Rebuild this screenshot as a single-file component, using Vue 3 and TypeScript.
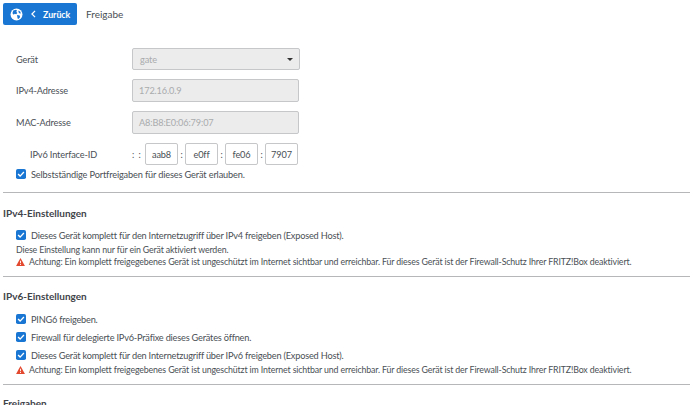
<script setup lang="ts">
const warning = 'Achtung: Ein komplett freigegebenes Gerät ist ungeschützt im Internet sichtbar und erreichbar. Für dieses Gerät ist der Firewall-Schutz Ihrer FRITZ!Box deaktiviert.'
const segments = ['aab8', 'e0ff', 'fe06', '7907']
</script>

<template>
  <div class="page">
    <header class="top">
      <button class="back" type="button">
        <svg class="globe" viewBox="0 0 24 24" width="13" height="13">
          <circle cx="12" cy="12" r="11" fill="#fff" />
          <path fill="#1976d2" d="M6 4.500l5-1.500 2 2-1.500 2 2 2-2 2.500-3-1-1.500 2-2.500-3zM13 13l5 1 .5 3-3 3.500-1.500-1-.5-3.500zM16 4.500l3 2.500 1 3-3-.5-1.500-2.500z" />
        </svg>
        <svg class="chev" viewBox="0 0 8 12" width="5" height="8">
          <path d="M6.500 1L1.500 6l5 5" fill="none" stroke="#fff" stroke-width="2" />
        </svg>
        <span>Zurück</span>
      </button>
      <span class="title">Freigabe</span>
    </header>

    <section class="form">
      <div class="row first">
        <label>Gerät</label>
        <div class="select">gate<i class="caret"></i></div>
      </div>
      <div class="row">
        <label>IPv4-Adresse</label>
        <div class="field">172.16.0.9</div>
      </div>
      <div class="row">
        <label>MAC-Adresse</label>
        <div class="field">A8:B8:E0:06:79:07</div>
      </div>
      <div class="row v6">
        <label>IPv6 Interface-ID</label>
        <div class="segs">
          <span class="sep lead">:&nbsp;&nbsp;:</span>
          <template v-for="(s, i) in segments" :key="s">
            <span v-if="i" class="sep">:</span>
            <div class="seg">{{ s }}</div>
          </template>
        </div>
      </div>
      <div class="check first-check">
        <svg class="box" viewBox="0 0 11 11"><rect width="11" height="11" rx="2" fill="#1976d2" /><path d="M2.300 5.600l2.200 2.200 4.200-4.500" fill="none" stroke="#fff" stroke-width="1.500" /></svg>
        Selbstständige Portfreigaben für dieses Gerät erlauben.
      </div>
    </section>

    <section class="block v4">
      <h2>IPv4-Einstellungen</h2>
      <div class="check">
        <svg class="box" viewBox="0 0 11 11"><rect width="11" height="11" rx="2" fill="#1976d2" /><path d="M2.300 5.600l2.200 2.200 4.200-4.500" fill="none" stroke="#fff" stroke-width="1.500" /></svg>
        Dieses Gerät komplett für den Internetzugriff über IPv4 freigeben (Exposed Host).
      </div>
      <p class="note">Diese Einstellung kann nur für ein Gerät aktiviert werden.</p>
      <p class="warn">
        <svg class="tri" viewBox="0 0 10 9"><path d="M5 0l5 9H0z" fill="#e2492f" /><path d="M4.500 3h1v3h-1zM4.500 6.800h1v1h-1z" fill="#fff" /></svg>
        {{ warning }}
      </p>
    </section>

    <section class="block v6b">
      <h2>IPv6-Einstellungen</h2>
      <div class="check">
        <svg class="box" viewBox="0 0 11 11"><rect width="11" height="11" rx="2" fill="#1976d2" /><path d="M2.300 5.600l2.200 2.200 4.200-4.500" fill="none" stroke="#fff" stroke-width="1.500" /></svg>
        PING6 freigeben.
      </div>
      <div class="check">
        <svg class="box" viewBox="0 0 11 11"><rect width="11" height="11" rx="2" fill="#1976d2" /><path d="M2.300 5.600l2.200 2.200 4.200-4.500" fill="none" stroke="#fff" stroke-width="1.500" /></svg>
        Firewall für delegierte IPv6-Präfixe dieses Gerätes öffnen.
      </div>
      <div class="check">
        <svg class="box" viewBox="0 0 11 11"><rect width="11" height="11" rx="2" fill="#1976d2" /><path d="M2.300 5.600l2.200 2.200 4.200-4.500" fill="none" stroke="#fff" stroke-width="1.500" /></svg>
        Dieses Gerät komplett für den Internetzugriff über IPv6 freigeben (Exposed Host).
      </div>
      <p class="warn">
        <svg class="tri" viewBox="0 0 10 9"><path d="M5 0l5 9H0z" fill="#e2492f" /><path d="M4.500 3h1v3h-1zM4.500 6.800h1v1h-1z" fill="#fff" /></svg>
        {{ warning }}
      </p>
    </section>

    <section class="block last">
      <h2>Freigaben</h2>
    </section>
  </div>
</template>

<style>
html, body { margin: 0; background: #fff; overflow: hidden; }
</style>

<style scoped>
.page {
  width: 690px;
  height: 405px;
  overflow: hidden;
  box-sizing: border-box;
  padding: 3px 0 0 3px;
  font-family: Lato, "Noto Sans", sans-serif;
  font-size: 9.200px;
  letter-spacing: -0.14px;
  color: #4a4f55;
}
.top { display: flex; align-items: center; height: 22px; gap: 9px; }
.back {
  width: 74px;
  height: 22px;
  padding: 0 0 0 7px;
  border: 0;
  border-radius: 2px;
  background: #1976d2;
  color: #fff;
  display: flex;
  align-items: center;
  font: 700 8.800px Lato, sans-serif;
}
.chev { margin: 0 7px 0 8px; }
.title { font-size: 10px; letter-spacing: 0; }
.form { padding: 0 0 0 13px; }
.row { display: flex; align-items: center; height: 23px; margin-top: 9px; }
.row.first { margin-top: 23px; height: 22px; }
.row.v6 { height: 22px; }
.row label { width: 116px; }
.select, .field, .seg {
  box-sizing: border-box;
  border: 1px solid #c5c7c8;
  border-radius: 2px;
  display: flex;
  align-items: center;
}
.select, .field { background: #ececec; color: #a9abad; height: 100%; padding-left: 6px; }
.select { width: 168px; padding-left: 7px; position: relative; }
.field { width: 167px; }
.caret {
  position: absolute;
  right: 6px;
  top: 9px;
  border: 3px solid transparent;
  border-top: 3px solid #333;
  border-bottom: 0;
}
.v6 label { padding-left: 14px; width: 102px; }
.segs { display: flex; align-items: center; height: 100%; }
.sep { width: 7px; text-align: center; }
.lead { width: 13px; text-align: left; white-space: nowrap; }
.seg {
  width: 33px;
  height: 22px;
  justify-content: center;
  background: #fff;
  color: #4a4f55;
}
.check { display: flex; align-items: center; gap: 5px; height: 10px; white-space: nowrap; }
.box { width: 10px; height: 10px; flex: none; }
.first-check { margin-top: 4px; }
.block { border-top: 1px solid #b5b7b8; }
h2 { margin: 0; font-size: 10px; font-weight: 700; line-height: 12px; letter-spacing: 0; color: #3f444a; }
.block .check { margin-left: 13px; letter-spacing: -0.2px; }
.note { margin: 4px 0 0 13px; line-height: 12px; font-size: 8.800px; }
.warn { margin: 0 0 0 13px; line-height: 11px; display: flex; align-items: center; gap: 4px; white-space: nowrap; font-size: 8.800px; }
.tri { width: 9px; height: 8px; flex: none; }
.v4 { margin-top: 13px; }
.v4 h2 { padding-top: 14px; }
.v4 .check { margin-top: 11px; }
.v6b { margin-top: 9px; }
.v6b h2 { padding-top: 13px; }
.v6b .check { margin-top: 8px; }
.v6b h2 + .check { margin-top: 12px; }
.v6b .warn { margin-top: 4px; }
.last { margin-top: 9px; }
.last h2 { padding-top: 12px; }
</style>
